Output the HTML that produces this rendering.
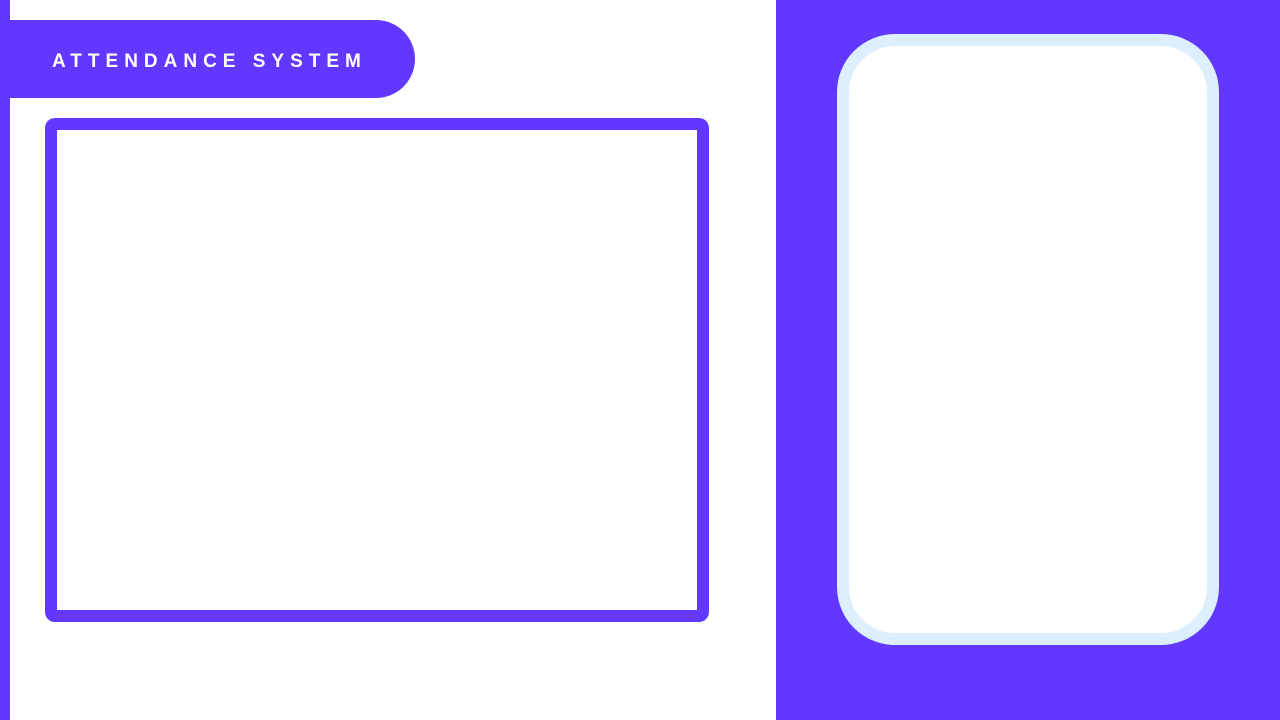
<!DOCTYPE html>
<html><head><meta charset="utf-8"><style>
html,body{margin:0;padding:0;width:1280px;height:720px;overflow:hidden;background:#fff;position:relative}
.bar{position:absolute;left:0;top:0;width:10px;height:720px;background:#6238FF}
.pill{position:absolute;left:0;top:20px;width:415px;height:78px;background:#6238FF;border-radius:0 39px 39px 0}
.pill span{position:absolute;left:52px;top:3px;line-height:78px;color:#fff;font-family:"Liberation Sans",sans-serif;font-weight:bold;font-size:19px;letter-spacing:6.0px;white-space:nowrap}
.frame{position:absolute;left:45px;top:118px;width:640px;height:480px;border:12px solid #6238FF;border-radius:10px}
.right{position:absolute;left:776px;top:0;width:504px;height:720px;background:#6238FF}
.phone{position:absolute;left:837px;top:34px;width:358px;height:587px;border:12px solid #DDEEFF;border-radius:58px;background:#fff}
</style></head><body>
<div class="bar"></div>
<div class="pill"><span>ATTENDANCE SYSTEM</span></div>
<div class="frame"></div>
<div class="right"></div>
<div class="phone"></div>
</body></html>
